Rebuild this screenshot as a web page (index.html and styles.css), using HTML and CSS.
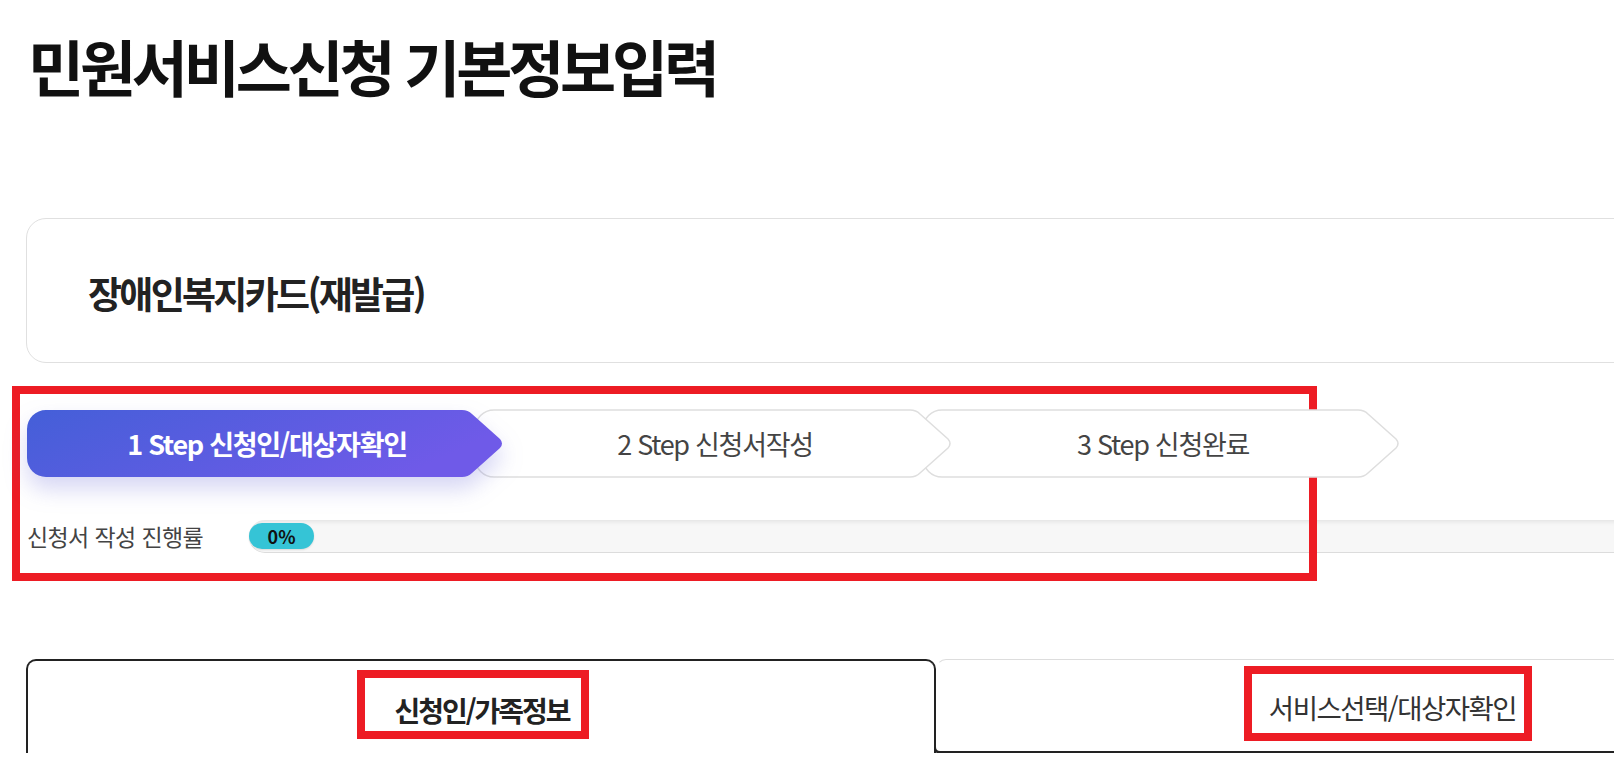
FILE: index.html
```html
<!DOCTYPE html>
<html lang="ko">
<head>
<meta charset="utf-8">
<title>민원서비스신청 기본정보입력</title>
<link rel="stylesheet" href="styles.css">
</head>
<body>
<main class="page">
  <h1 class="page-title">민원서비스신청 기본정보입력</h1>

  <section class="service-card">
    <h2 class="service-name">장애인복지카드(재발급)</h2>
  </section>

  <div class="step-area">
    <ol class="steps">
      <li class="step step-active">
        <svg class="step-shape" viewBox="0 0 479 69" width="479" height="69" aria-hidden="true">
          <defs>
            <linearGradient id="stepGrad" x1="0" y1="0" x2="1" y2="0.3">
              <stop offset="0" stop-color="#445fd8"/>
              <stop offset="1" stop-color="#6f5ae8"/>
            </linearGradient>
          </defs>
          <path d="M20,1 H436 Q442,1 446,5 L474,30 Q478,34.5 474,39 L446,64 Q442,68 436,68 H20 A19,19 0 0 1 1,49 V20 A19,19 0 0 1 20,1 Z" fill="url(#stepGrad)"/>
        </svg>
        <span class="step-label">1 Step 신청인/대상자확인</span>
      </li>
      <li class="step step-2">
        <svg class="step-shape" viewBox="0 0 479 69" width="479" height="69" aria-hidden="true">
          <path d="M20,1 H436 Q442,1 446,5 L474,30 Q478,34.5 474,39 L446,64 Q442,68 436,68 H20 A19,19 0 0 1 1,49 V20 A19,19 0 0 1 20,1 Z" fill="#fff" stroke="#dedede" stroke-width="1.5"/>
        </svg>
        <span class="step-label">2 Step 신청서작성</span>
      </li>
      <li class="step step-3">
        <svg class="step-shape" viewBox="0 0 479 69" width="479" height="69" aria-hidden="true">
          <path d="M20,1 H436 Q442,1 446,5 L474,30 Q478,34.5 474,39 L446,64 Q442,68 436,68 H20 A19,19 0 0 1 1,49 V20 A19,19 0 0 1 20,1 Z" fill="#fff" stroke="#dedede" stroke-width="1.5"/>
        </svg>
        <span class="step-label">3 Step 신청완료</span>
      </li>
    </ol>

    <div class="progress-row">
      <span class="progress-label">신청서 작성 진행률</span>
      <div class="progress-track">
        <div class="progress-fill">0%</div>
      </div>
    </div>

    <div class="annot annot-steps"></div>
  </div>

  <div class="tabs">
    <div class="tab tab-active">
      <span class="tab-label">신청인/가족정보</span>
      <div class="annot annot-tab1"></div>
    </div>
    <div class="tab tab-next">
      <span class="tab-label">서비스선택/대상자확인</span>
      <div class="annot annot-tab2"></div>
    </div>
  </div>
</main>
</body>
</html>
```

FILE: styles.css
```css
html {
  overflow: hidden;
}

body {
  margin: 0;
  background: #fff;
  font-family: "Noto Sans CJK KR", "Noto Sans", sans-serif;
  color: #222;
}

.page {
  width: 1822px;
  padding-left: 26px;
}

.page-title {
  margin: 0;
  padding-top: 35px;
  padding-left: 2px;
  font-size: 61px;
  line-height: 61px;
  font-weight: 700;
  letter-spacing: -4.2px;
  color: #111;
}

.service-card {
  margin-top: 122px;
  height: 145px;
  box-sizing: border-box;
  border: 1px solid #e0e0e0;
  border-radius: 20px;
  display: flex;
  align-items: center;
  padding: 6px 0 0 61px;
}

.service-name {
  margin: 0;
  font-size: 37px;
  line-height: 1;
  font-weight: 700;
  letter-spacing: -2.7px;
  color: #222;
}

.step-area {
  position: relative;
  margin-top: 46px;
}

.steps {
  list-style: none;
  margin: 0;
  padding: 0;
  display: flex;
}

.step {
  position: relative;
  width: 479px;
  height: 69px;
  flex: none;
  display: flex;
  align-items: center;
  justify-content: center;
}

.step + .step {
  margin-left: -31px;
}

.step-active { z-index: 3; }
.step-2 { z-index: 2; }
.step-3 { z-index: 1; }

.step-shape {
  position: absolute;
  left: 0;
  top: 0;
}

.step-active .step-shape {
  filter: drop-shadow(0 12px 11px rgba(90, 90, 210, 0.25));
}

.step-label {
  position: relative;
  font-size: 27px;
  line-height: 1;
  letter-spacing: -1.3px;
  color: #444;
  padding-left: 3px;
}

.step-active .step-label {
  color: #fff;
  font-weight: 700;
}

.progress-row {
  margin-top: 42px;
  display: flex;
  align-items: center;
}

.progress-label {
  width: 222px;
  flex: none;
  font-size: 23px;
  line-height: 1;
  letter-spacing: -0.6px;
  color: #444;
  padding-left: 1px;
}

.progress-track {
  flex: 1;
  height: 33px;
  box-sizing: border-box;
  background: #f7f7f7;
  border-bottom: 1px solid #dcdcdc;
  border-radius: 16px 0 0 16px;
  box-shadow: inset 0 4px 4px -2px rgba(0, 0, 0, 0.08);
  display: flex;
  align-items: center;
}

.progress-fill {
  width: 65px;
  height: 26px;
  border-radius: 13px;
  background: #35c4d6;
  box-shadow: 0 1px 2px rgba(0, 0, 0, 0.12);
  display: flex;
  align-items: center;
  justify-content: center;
  font-size: 18px;
  font-weight: 700;
  color: #111;
}

.annot {
  position: absolute;
  box-sizing: border-box;
  border: 8px solid #ed1c24;
}

.annot-steps {
  left: -14px;
  top: -23px;
  width: 1305px;
  height: 195px;
}

.tabs {
  margin-top: 106px;
  display: flex;
  height: 94px;
}

.tab {
  position: relative;
  box-sizing: border-box;
  height: 94px;
  display: flex;
  align-items: center;
  justify-content: center;
  padding-top: 6px;
}

.tab-active {
  width: 910px;
  flex: none;
  border: 2px solid #222;
  border-bottom: none;
  border-radius: 10px 10px 0 0;
}

.tab-active .tab-label {
  font-size: 28px;
  line-height: 1;
  font-weight: 700;
  letter-spacing: -2px;
  color: #222;
  padding-left: 2px;
}

.tab-next {
  flex: 1;
  border-top: 1px solid #dddddd;
  border-left: 1px solid transparent;
  border-bottom: 2px solid #222;
  border-top-left-radius: 10px;
  padding-top: 5px;
}

.tab-next::before {
  content: "";
  position: absolute;
  left: -3px;
  bottom: -2px;
  width: 8px;
  height: 10px;
  border-left: 2px solid #222;
  border-bottom: 2px solid #222;
  border-bottom-left-radius: 6px;
}

.tab-next .tab-label {
  font-size: 27.5px;
  line-height: 1;
  letter-spacing: -1.5px;
  color: #333;
}

.annot-tab1 {
  left: 329px;
  top: 9px;
  width: 232px;
  height: 69px;
}

.annot-tab2 {
  left: 307px;
  top: 6px;
  width: 288px;
  height: 75px;
}
```
